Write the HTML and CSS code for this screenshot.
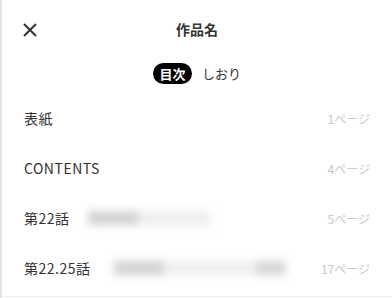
FILE: index.html
```html
<!DOCTYPE html>
<html lang="ja">
<head>
<meta charset="utf-8">
<link rel="stylesheet" href="styles.css">
</head>
<body>
<div class="panel">
  <header class="head">
    <button class="close" aria-label="閉じる">
      <svg width="16" height="16" viewBox="0 0 16 16"><path d="M2 2L14 14M14 2L2 14" stroke="#333" stroke-width="2" fill="none"/></svg>
    </button>
    <h1 class="title">作品名</h1>
  </header>
  <nav class="tabs">
    <span class="tab active">目次</span>
    <span class="tab">しおり</span>
  </nav>
  <ul class="list">
    <li class="row"><span class="name">表紙</span><span class="page">1ページ</span></li>
    <li class="row"><span class="name">CONTENTS</span><span class="page">4ページ</span></li>
    <li class="row"><span class="name">第22話</span><span class="blur b1"><i class="d"></i><i class="l"></i></span><span class="page">5ページ</span></li>
    <li class="row"><span class="name">第22.25話</span><span class="blur b2"><i class="d"></i><i class="l"></i><i class="d2"></i></span><span class="page">17ページ</span></li>
  </ul>
</div>
</body>
</html>
```
FILE: styles.css
```css
html, body { margin: 0; padding: 0; background: #fff; }
body { font-family: "Noto Sans CJK JP", "Noto Sans", sans-serif; color: #333; }
.panel {
  width: 392px; height: 298px; box-sizing: border-box;
  border-left: 2px solid #e4e4e4;
  position: relative; overflow: hidden;
}
.panel::after {
  content: ""; position: absolute; left: 0; right: 0; bottom: 1px; height: 1px; background: #eee;
}
.head { height: 56px; display: flex; align-items: center; justify-content: center; position: relative; }
.close {
  position: absolute; left: 18px; top: 20px; width: 20px; height: 20px;
  border: 0; background: none; padding: 0; display: flex; align-items: center; justify-content: center;
}
.title { margin: 0; font-size: 14px; font-weight: 700; color: #333; line-height: 20px; padding-top: 1px; }
.tabs { display: flex; justify-content: center; align-items: center; gap: 6px; height: 35px; padding-left: 4px; }
.tab { font-size: 13px; line-height: 21px; padding: 0 4px; border-radius: 11px; color: #333; }
.tab.active { background: #000; color: #fff; font-weight: 700; padding: 0 6.5px; }
.list { list-style: none; margin: 0; padding: 0; }
.row { height: 50px; display: flex; align-items: center; padding: 0 22px 0 22px; }
.row:first-child { margin-top: 2px; }
.name { font-size: 14px; color: #333; white-space: nowrap; letter-spacing: 0.5px; }
.page { margin-left: auto; font-size: 12px; color: #c8c8c8; }
.blur { display: flex; align-items: center; height: 20px; filter: blur(4px); }
.blur i { display: block; height: 14px; }
.b1 { margin-left: 12px; width: 130px; }
.b1 .d { width: 50px; background: #d2d2d2; margin-left: 6px; }
.b1 .l { width: 72px; background: #eeeeee; }
.b2 { margin-left: 16px; width: 185px; }
.b2 .d { width: 50px; background: #d2d2d2; margin-left: 8px; }
.b2 .l { width: 92px; background: #f0f0f0; }
.b2 .d2 { width: 30px; background: #d6d6d6; }
```
